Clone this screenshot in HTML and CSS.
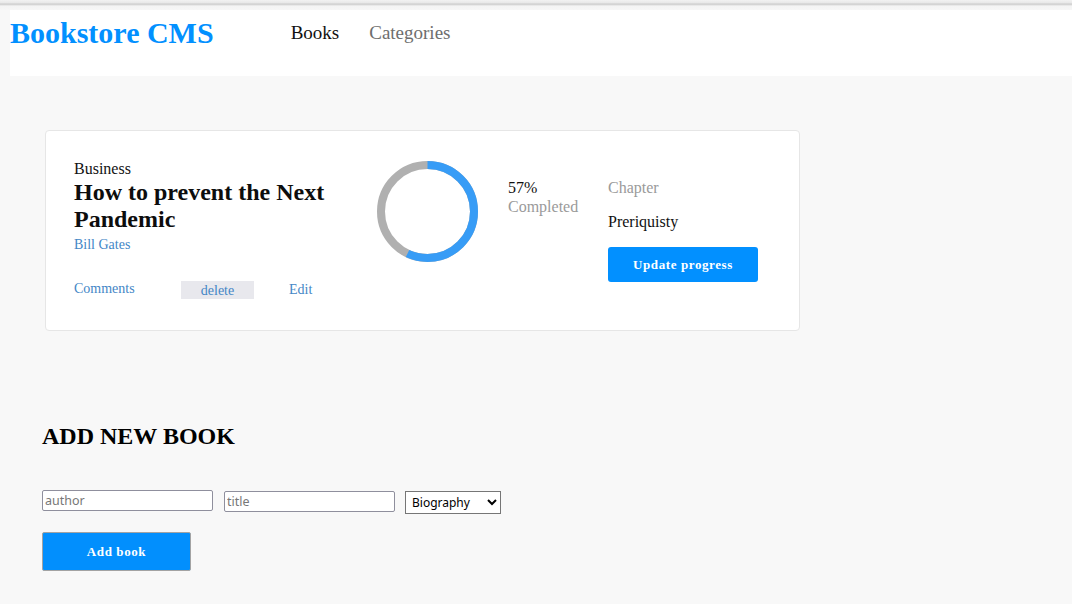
FILE: index.html
```html
<!DOCTYPE html>
<html lang="en">
<head>
<meta charset="utf-8">
<title>Bookstore CMS</title>
<link rel="stylesheet" href="styles.css">
</head>
<body>
<div class="topbar"></div>
<header class="header">
  <h1 class="logo">Bookstore CMS</h1>
  <nav class="nav">
    <a class="nav-link active">Books</a>
    <a class="nav-link">Categories</a>
  </nav>
</header>
<main class="main">
  <section class="book-card">
    <div class="book-info">
      <p class="genre">Business</p>
      <h2 class="book-title">How to prevent the Next Pandemic</h2>
      <p class="author">Bill Gates</p>
      <div class="actions">
        <button class="link-btn" type="button">Comments</button>
        <button class="link-btn delete-btn" type="button">delete</button>
        <button class="link-btn" type="button">Edit</button>
      </div>
    </div>
    <div class="progress">
      <svg class="ring" width="101" height="101" viewBox="0 0 101 101">
        <circle cx="50.5" cy="50.5" r="46.5" fill="none" stroke="#b0b0b0" stroke-width="8"/>
        <circle cx="50.5" cy="50.5" r="46.5" fill="none" stroke="#379cf6" stroke-width="8"
                stroke-dasharray="166.5 292.2" transform="rotate(-90 50.5 50.5)"/>
      </svg>
      <div class="progress-text">
        <p class="percent">57%</p>
        <p class="completed">Completed</p>
      </div>
    </div>
    <div class="chapter">
      <p class="chapter-label">Chapter</p>
      <p class="chapter-name">Preriquisty</p>
      <button class="update-btn" type="button">Update progress</button>
    </div>
  </section>
  <section class="add-book">
    <h2 class="add-title">ADD NEW BOOK</h2>
    <form class="add-form">
      <div class="fields">
        <input class="field" type="text" placeholder="author">
        <input class="field field-title" type="text" placeholder="title">
        <select class="category">
          <option>Biography</option>
          <option>Business</option>
          <option>Fiction</option>
        </select>
      </div>
      <button class="add-btn" type="button">Add book</button>
    </form>
  </section>
</main>
</body>
</html>
```

FILE: styles.css
```css
* {
  box-sizing: border-box;
}

body {
  margin: 0;
  background: #f8f8f8;
  font-family: "Liberation Serif", "Times New Roman", serif;
  color: #121212;
}

p {
  margin: 0;
}

.topbar {
  height: 10px;
  background: linear-gradient(to bottom, #f2f2f2 0, #e8e8e8 3px, #cacaca 4px, #dedede 5px, #f4f4f4 6px, #f7f7f7 10px);
}

.header {
  margin-left: 10px;
  height: 66px;
  background: #fff;
  display: flex;
  align-items: flex-start;
}

.logo {
  margin: 6px 0 0 0;
  font-size: 30px;
  line-height: 34px;
  font-weight: bold;
  color: #0290ff;
}

.nav {
  display: flex;
  gap: 30px;
  margin: 12px 0 0 77px;
}

.nav-link {
  font-size: 19px;
  line-height: 22px;
  color: #6e6e6e;
  text-decoration: none;
}

.nav-link.active {
  color: #111;
}

.main {
  padding-left: 42px;
}

.book-card {
  margin: 54px 0 0 3px;
  width: 755px;
  border: 1px solid #e6e6e6;
  border-radius: 4px;
  background: #fff;
  display: flex;
  align-items: flex-start;
  padding: 28px 43px 31px 28px;
}

.book-info {
  width: 280px;
  flex-shrink: 0;
}

.genre {
  font-size: 16px;
  line-height: 18px;
  padding-top: 1px;
}

.book-title {
  margin: 1px 0 0 0;
  font-size: 24px;
  line-height: 27px;
  font-weight: bold;
  color: #0d0d0d;
}

.author {
  margin-top: 3px;
  font-size: 14px;
  line-height: 18px;
  color: #4386c6;
}

.actions {
  margin-top: 25px;
  display: grid;
  grid-template-columns: 107px 108px auto;
  align-items: center;
}

.link-btn {
  background: none;
  border: 0;
  padding: 0;
  font-family: "Liberation Serif", "Times New Roman", serif;
  font-size: 14px;
  line-height: 18px;
  color: #4386c6;
  text-align: left;
  justify-self: start;
}

.delete-btn {
  width: 73px;
  height: 18px;
  margin-top: 2px;
  padding-top: 1px;
  background: #e8e8ed;
  text-align: center;
}

.actions .link-btn:last-child {
  padding-top: 2px;
}

.progress {
  display: flex;
  align-items: flex-start;
  margin-left: 23px;
}

.ring {
  display: block;
  margin-top: 2px;
  flex-shrink: 0;
}

.progress-text {
  width: 100px;
  margin: 19px 0 0 30px;
}

.percent {
  font-size: 16px;
  line-height: 19px;
  color: #111;
}

.completed {
  font-size: 16px;
  line-height: 19px;
  color: #9a9a9a;
}

.chapter {
  margin-top: 20px;
}

.chapter-label {
  font-size: 16px;
  line-height: 18px;
  color: #9a9a9a;
}

.chapter-name {
  margin-top: 16px;
  font-size: 16px;
  line-height: 18px;
  color: #111;
}

.update-btn {
  margin-top: 16px;
  width: 150px;
  height: 35px;
  border: 0;
  border-radius: 3px;
  background: #0290ff;
  color: #fff;
  font-family: "Liberation Serif", "Times New Roman", serif;
  font-size: 13px;
  font-weight: bold;
  letter-spacing: 0.6px;
}

.add-title {
  margin: 91px 0 0 0;
  font-size: 24px;
  line-height: 28px;
  font-weight: bold;
  color: #000;
}

.fields {
  margin-top: 40px;
  display: flex;
  align-items: flex-start;
  gap: 10px;
}

.field {
  width: 171px;
  height: 21px;
  border: 1px solid #8f8f9d;
  border-radius: 2px;
  background: #fff;
  padding: 0 2px;
  font-family: "Noto Sans", "DejaVu Sans", sans-serif;
  font-size: 12.5px;
  color: #222;
}

.field::placeholder {
  color: #777;
}

.field-title {
  margin-left: 1px;
  margin-top: 1px;
}

.category {
  width: 96px;
  height: 23px;
  margin-top: 1px;
  border: 1px solid #767676;
  border-radius: 0;
  background: #fff;
  font-family: "Noto Sans", "DejaVu Sans", sans-serif;
  font-size: 12px;
  color: #000;
  padding: 0 2px;
}

.add-btn {
  margin-top: 18px;
  width: 149px;
  height: 39px;
  border: 1px solid #a3a3a3;
  border-radius: 2px;
  background: #028ffd;
  color: #fff;
  font-family: "Liberation Serif", "Times New Roman", serif;
  font-size: 13px;
  font-weight: bold;
  letter-spacing: 0.6px;
}
```
